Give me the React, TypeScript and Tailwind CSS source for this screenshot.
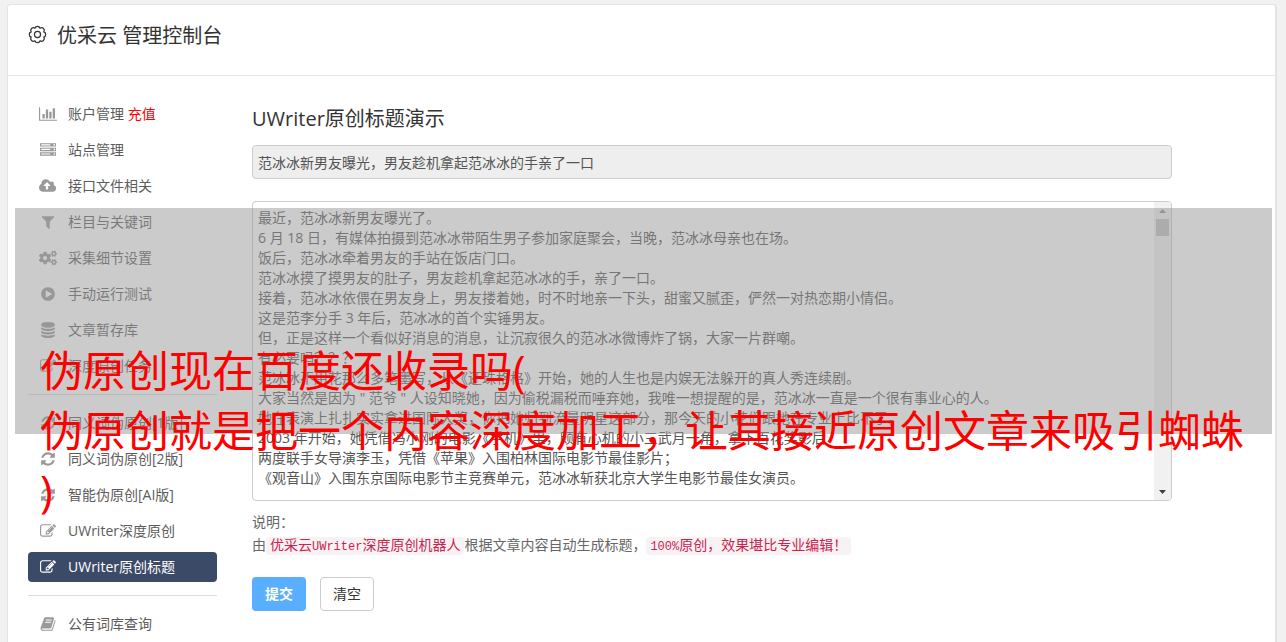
import { useState } from 'react';
import { FaCogs } from 'react-icons/fa';

const ICONS = {
    chart: {
        width: 2048,
        path: 'M640 896v512h-256v-512h256zm384-512v1024h-256v-1024h256zm1024 1152v128h-2048v-1536h128v1408h1920zm-640-896v768h-256v-768h256zm384-384v1152h-256v-1152h256z',
    },
    server: {
        width: 1792,
        path: 'M128 1408h1024v-128h-1024v128zm0-512h1024v-128h-1024v128zm1568 448q0-40-28-68t-68-28-68 28-28 68 28 68 68 28 68-28 28-68zm-1568-960h1024v-128h-1024v128zm1568 448q0-40-28-68t-68-28-68 28-28 68 28 68 68 28 68-28 28-68zm0-512q0-40-28-68t-68-28-68 28-28 68 28 68 68 28 68-28 28-68zm96 832v384h-1792v-384h1792zm0-512v384h-1792v-384h1792zm0-512v384h-1792v-384h1792z',
    },
    upload: {
        width: 1920,
        path: 'M1280 864q0-14-9-23l-352-352q-9-9-23-9t-23 9l-351 351q-10 12-10 24 0 14 9 23t23 9h224v352q0 13 9.5 22.5t22.5 9.5h192q13 0 22.5-9.5t9.5-22.5v-352h224q13 0 22.5-9.5t9.5-22.5zm640 288q0 159-112.5 271.5t-271.5 112.5h-1088q-185 0-316.5-131.5t-131.5-316.5q0-130 70-240t188-165q-2-30-2-43 0-212 150-362t362-150q156 0 285.5 87t188.5 231q71-62 166-62 106 0 181 75t75 181q0 76-41 138 130 31 213.5 135.5t83.5 238.5z',
    },
    filter: {
        width: 1792,
        path: 'M1595 295q17 41-14 70l-493 493v742q0 42-39 59-13 5-25 5-27 0-45-19l-256-256q-19-19-19-45v-486l-493-493q-31-29-14-70 17-39 59-39h1280q42 0 59 39z',
    },
    play: {
        width: 1792,
        path: 'M896 128q209 0 385.5 103t279.5 279.5 103 385.5-103 385.5-279.5 279.5-385.5 103-385.5-103-279.5-279.5-103-385.5 103-385.5 279.5-279.5 385.5-103zm384 823q32-18 32-55t-32-55l-544-320q-31-19-64-1-32 19-32 56v640q0 37 32 56 16 8 32 8 17 0 32-9z',
    },
    database: {
        width: 1792,
        path: 'M896 768q237 0 443-43t325-127v170q0 69-103 128t-280 93.5-385 34.5-385-34.5-280-93.5-103-128v-170q119 84 325 127t443 43zm0 768q237 0 443-43t325-127v170q0 69-103 128t-280 93.5-385 34.5-385-34.5-280-93.5-103-128v-170q119 84 325 127t443 43zm0-384q237 0 443-43t325-127v170q0 69-103 128t-280 93.5-385 34.5-385-34.5-280-93.5-103-128v-170q119 84 325 127t443 43zm0-1152q208 0 385 34.5t280 93.5 103 128v128q0 69-103 128t-280 93.5-385 34.5-385-34.5-280-93.5-103-128v-128q0-69 103-128t280-93.5 385-34.5z',
    },
    edit: {
        width: 1792,
        path: 'M888 1184l116-116-152-152-116 116v56h96v96h56zm440-720q-16-16-33 1l-350 350q-17 17-1 33t33-1l350-350q17-17 1-33zm80 594v190q0 119-84.5 203.5t-203.5 84.5h-832q-119 0-203.5-84.5t-84.5-203.5v-832q0-119 84.5-203.5t203.5-84.5h832q63 0 117 25 15 7 18 23 3 17-9 29l-49 49q-14 14-32 8-23-6-45-6h-832q-66 0-113 47t-47 113v832q0 66 47 113t113 47h832q66 0 113-47t47-113v-126q0-13 9-22l64-64q15-15 35-7t20 29zm-96-738l288 288-672 672h-288v-288zm444 132l-92 92-288-288 92-92q28-28 68-28t68 28l152 152q28 28 28 68t-28 68z',
    },
    refresh: {
        width: 1792,
        path: 'M1639 1056q0 5-1 7-64 268-268 434.5t-478 166.5q-146 0-282.5-55t-243.5-157l-129 129q-19 19-45 19t-45-19-19-45v-448q0-26 19-45t45-19h448q26 0 45 19t19 45-19 45l-137 137q71 66 161 102t187 36q134 0 250-65t186-179q11-17 53-117 8-23 30-23h192q13 0 22.5 9.5t9.5 22.5zm25-800v448q0 26-19 45t-45 19h-448q-26 0-45-19t-19-45 19-45l138-138q-148-137-349-137-134 0-250 65t-186 179q-11 17-53 117-8 23-30 23h-199q-13 0-22.5-9.5t-9.5-22.5v-7q65-268 270-434.5t480-166.5q146 0 284 55.5t245 156.5l130-129q19-19 45-19t45 19 19 45z',
    },
    book: {
        width: 1792,
        path: 'M1703 478q40 57 18 129l-275 906q-19 64-76.5 107.5t-122.5 43.5h-923q-77 0-148.5-53.5t-99.5-131.5q-24-67-2-127 0-4 3-27t4-37q1-8-3-21.5t-3-19.5q2-11 8-21t16.5-23.5 16.5-23.5q23-38 45-91.5t30-91.5q3-10 .5-30t-.5-28q3-11 17-28t17-23q21-36 42-92t25-90q1-9-2.5-32t.5-28q4-13 22-30.5t22-22.5q19-26 42.5-84.5t27.5-96.5q1-8-3-25.5t-2-26.5q2-8 9-18t18-23 17-21q8-12 16.5-30.5t15-35 16-36 19.5-32 26.5-23.5 36-11.5 47.5 5.5l-1 3q38-9 51-9h761q74 0 114 56t18 130l-274 906q-36 119-71.5 153.5t-128.5 34.5h-869q-27 0-38 15-11 16-1 43 24 70 144 70h923q29 0 56-15.5t35-41.5l300-987q7-22 5-57 38 15 59 43zm-1064 2q-4 13 2 22.5t20 9.5h608q13 0 25.5-9.5t16.5-22.5l21-64q4-13-2-22.5t-20-9.5h-608q-13 0-25.5 9.5t-16.5 22.5zm-83 256q-4 13 2 22.5t20 9.5h608q13 0 25.5-9.5t16.5-22.5l21-64q4-13-2-22.5t-20-9.5h-608q-13 0-25.5 9.5t-16.5 22.5z',
    },
};

type IconName = keyof typeof ICONS | 'cogs';

interface MenuItem {
    icon: IconName;
    label: string;
    extra?: string;
    active?: boolean;
}

const MENU: MenuItem[][] = [
    [
        { icon: 'chart', label: '账户管理', extra: '充值' },
        { icon: 'server', label: '站点管理' },
        { icon: 'upload', label: '接口文件相关' },
        { icon: 'filter', label: '栏目与关键词' },
        { icon: 'cogs', label: '采集细节设置' },
        { icon: 'play', label: '手动运行测试' },
        { icon: 'database', label: '文章暂存库' },
        { icon: 'edit', label: '深度原创任务' },
    ],
    [
        { icon: 'refresh', label: '同义词伪原创[1版]' },
        { icon: 'refresh', label: '同义词伪原创[2版]' },
        { icon: 'refresh', label: '智能伪原创[AI版]' },
        { icon: 'edit', label: 'UWriter深度原创' },
        { icon: 'edit', label: 'UWriter原创标题', active: true },
    ],
    [{ icon: 'book', label: '公有词库查询' }],
];

const ARTICLE = [
    '最近，范冰冰新男友曝光了。',
    '6 月 18 日，有媒体拍摄到范冰冰带陌生男子参加家庭聚会，当晚，范冰冰母亲也在场。',
    '饭后，范冰冰牵着男友的手站在饭店门口。',
    '范冰冰摸了摸男友的肚子，男友趁机拿起范冰冰的手，亲了一口。',
    '接着，范冰冰依偎在男友身上，男友搂着她，时不时地亲一下头，甜蜜又腻歪，俨然一对热恋期小情侣。',
    '这是范李分手 3 年后，范冰冰的首个实锤男友。',
    '但，正是这样一个看似好消息的消息，让沉寂很久的范冰冰微博炸了锅，大家一片群嘲。',
    '有必要吗？？？',
    '范冰冰不用花那么多笔墨写，从《还珠格格》开始，她的人生也是内娱无法躲开的真人秀连续剧。',
    '大家当然是因为 " 范爷 " 人设知晓她，因为偷税漏税而唾弃她，我唯一想提醒的是，范冰冰一直是一个很有事业心的人。',
    '她在表演上扎扎实实拿过国际大奖，你把她归到流量明星这部分，那今天的小花们跟她在专业上比不了。',
    '2003 年开始，她凭借冯小刚的电影《手机》里，颇有心机的小三武月一角，拿下百花奖影后',
    '两度联手女导演李玉，凭借《苹果》入围柏林国际电影节最佳影片；',
    '《观音山》入围东京国际电影节主竞赛单元，范冰冰斩获北京大学生电影节最佳女演员。',
].join('\n');

function GearIcon() {
    return (
        <svg
            viewBox="0 0 20 20"
            className="mt-1 h-[19px] w-[19px] shrink-0"
            fill="none"
            stroke="currentColor"
            strokeWidth="1.3"
            strokeLinejoin="round"
            aria-hidden="true"
        >
            <path d="M16.6 7.3A2.8 2.8 0 0 1 16.6 12.7A2.8 2.8 0 0 1 12.7 16.6A2.8 2.8 0 0 1 7.3 16.6A2.8 2.8 0 0 1 3.4 12.7A2.8 2.8 0 0 1 3.4 7.3A2.8 2.8 0 0 1 7.3 3.4A2.8 2.8 0 0 1 12.7 3.4A2.8 2.8 0 0 1 16.6 7.3z" />
            <circle cx="10" cy="10" r="3.2" />
        </svg>
    );
}

function MenuIcon({ name }: { name: IconName }) {
    if (name === 'cogs') return <FaCogs className="h-4 w-[18px]" />;
    const { width, path } = ICONS[name];
    return (
        <svg viewBox={`0 0 ${width} 1792`} className="h-4 w-auto shrink-0" fill="currentColor" aria-hidden="true">
            <path d={path} />
        </svg>
    );
}

function Sidebar() {
    return (
        <nav className="w-[189px] shrink-0 pt-[23px]">
            {MENU.map((group, i) => (
                <div key={i}>
                    {i > 0 && <hr className="my-[13px] border-[#dddddd]" />}
                    <ul className="flex flex-col gap-1.5">
                        {group.map((item) => (
                            <li key={item.label}>
                                <a
                                    href="#"
                                    className={`flex h-[30px] items-center gap-2.5 rounded px-2.5 ${
                                        item.active ? 'bg-[#3b4a66] text-white' : 'text-[#5c5c5c]'
                                    }`}
                                >
                                    <span
                                        className={`flex w-5 shrink-0 justify-center ${
                                            item.active ? 'text-white' : 'text-[#999999]'
                                        }`}
                                    >
                                        <MenuIcon name={item.icon} />
                                    </span>
                                    <span>
                                        {item.label}
                                        {item.extra && <span className="text-[#ff0000]"> {item.extra}</span>}
                                    </span>
                                </a>
                            </li>
                        ))}
                    </ul>
                </div>
            ))}
        </nav>
    );
}

// Always-visible scroll track on the right of the article box
function ScrollTrack() {
    return (
        <div className="flex w-[17px] shrink-0 flex-col items-center bg-[#f1f1f1]" aria-hidden="true">
            <svg viewBox="0 0 17 17" className="h-[17px] w-[17px]" fill="#909090">
                <path d="M5 11h7L8.5 7z" />
            </svg>
            <div className="h-[17px] w-[13px] bg-[#c1c1c1]" />
            <div className="flex-1" />
            <svg viewBox="0 0 17 17" className="h-[17px] w-[17px]" fill="#404040">
                <path d="M5 7h7L8.5 11z" />
            </svg>
        </div>
    );
}

const codeClass =
    "rounded bg-[#f9f2f4] px-1 py-px font-['Liberation_Mono','Noto_Sans_CJK_SC',monospace] text-sm leading-[17px] text-[#c7254e]";

function TitleForm() {
    const [title, setTitle] = useState('范冰冰新男友曝光，男友趁机拿起范冰冰的手亲了一口');
    const [article, setArticle] = useState(ARTICLE);

    const clear = () => {
        setTitle('');
        setArticle('');
    };

    return (
        <form className="min-w-0 max-w-[920px] flex-1 pt-7" onSubmit={(e) => e.preventDefault()}>
            <h2 className="text-xl leading-[30px] text-[#333333]">UWriter原创标题演示</h2>
            <input
                type="text"
                aria-label="标题"
                readOnly
                value={title}
                className="mt-[11px] block h-[34px] w-full rounded border border-[#cccccc] bg-[#eeeeee] px-[5px] text-[#555555]"
            />
            <div className="mt-[22px] flex h-[300px] overflow-hidden rounded border border-[#cccccc] bg-white">
                <textarea
                    aria-label="文章内容"
                    value={article}
                    onChange={(e) => setArticle(e.target.value)}
                    className="block min-w-0 flex-1 resize-none overflow-hidden px-[5px] py-1.5 leading-5 text-[#555555] outline-none"
                />
                <ScrollTrack />
            </div>
            <div className="mt-[9px] leading-[23px] text-[#666666]">
                <p>说明：</p>
                <p>
                    由
                    <code className={codeClass}>
                        优采云<span className="text-xs">UWriter</span>深度原创机器人
                    </code>
                    根据文章内容自动生成标题，
                    <code className={codeClass}>
                        <span className="text-xs">100%</span>原创，效果堪比专业编辑！
                    </code>
                </p>
            </div>
            <div className="mt-[21px] flex gap-3.5">
                <button type="submit" className="h-[34px] w-[54px] rounded bg-[#5aaeff] font-bold text-white">
                    提交
                </button>
                <button
                    type="button"
                    onClick={clear}
                    className="h-[34px] w-[54px] rounded border border-[#cccccc] bg-white text-[#333333]"
                >
                    清空
                </button>
            </div>
        </form>
    );
}

export default function App() {
    return (
        <div className="relative flex min-h-screen flex-col bg-[#f1f1f1] pt-1 pr-[9px] pl-[7px] font-['Open_Sans','Noto_Sans_CJK_SC',sans-serif] text-sm">
            <div className="flex-1 rounded-t border-t border-r-2 border-l border-[#e4e4e4] bg-white">
                <header className="flex h-[71px] items-start gap-2.5 border-b border-[#e4e4e4] px-5 pt-4 text-[#333333]">
                    <GearIcon />
                    <h1 className="text-xl leading-[30px]">优采云 管理控制台</h1>
                </header>
                <main className="flex gap-[35px] pl-5">
                    <Sidebar />
                    <TitleForm />
                </main>
            </div>

            {/* Caption band laid over the console */}
            <div className="pointer-events-none absolute top-[208px] right-3.5 left-[15px] h-[226px] bg-[#979797]/50" />
            <div className="pointer-events-none absolute top-[341px] right-0 left-10 text-[43px] leading-[60px] text-[#ff0000]">
                <p>伪原创现在百度还收录吗(</p>
                <p>伪原创就是把一个内容深度加工，让其接近原创文章来吸引蜘蛛</p>
                <p>)</p>
            </div>
        </div>
    );
}
